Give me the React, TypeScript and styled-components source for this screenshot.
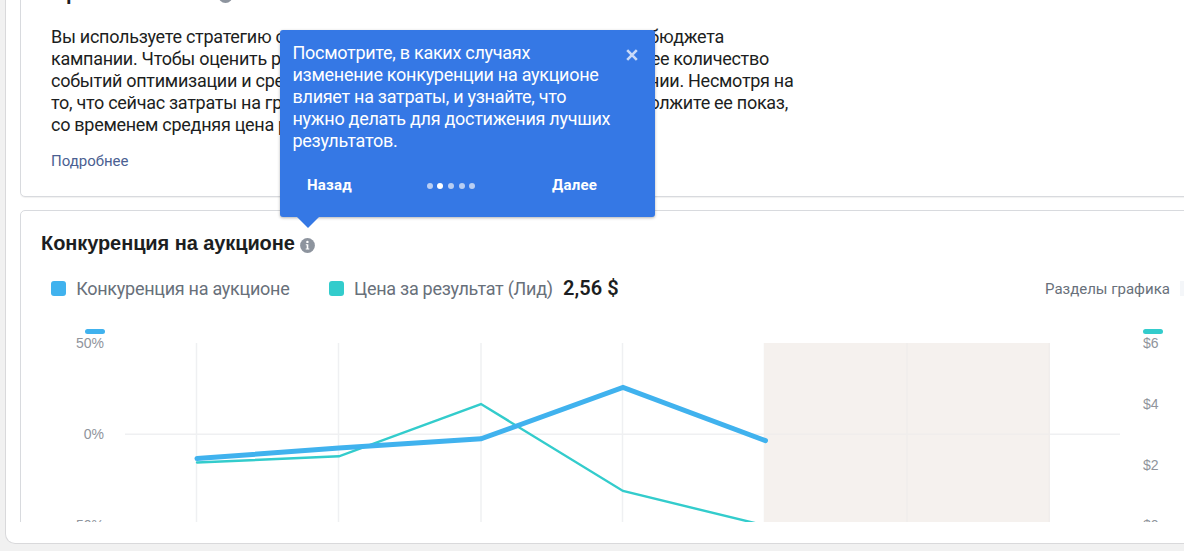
import React from "react";
import styled, { createGlobalStyle } from "styled-components";

const GlobalStyle = createGlobalStyle`
  * {
    box-sizing: border-box;
  }

  body {
    margin: 0;
    overflow: hidden;
    background: #f1f1f1;
    font-family: Roboto, "Liberation Sans", sans-serif;
    color: #1c1e21;
  }
`;

const Page = styled.div`
  position: relative;
  height: 551px;
  padding-left: 5px;
  overflow: hidden;
`;

const Panel = styled.div`
  width: 1200px;
  height: 544px;
  padding-left: 14px;
  background: #fff;
  border: 1px solid #d9d9db;
  border-top: none;
  border-radius: 0 0 0 10px;
`;

const PanelBody = styled.div`
  display: flex;
  flex-direction: column;
  gap: 13px;
  height: 522px;
  overflow: hidden;
`;

const Card = styled.section`
  flex: none;
  border: 1px solid #d8dade;
  border-radius: 5px;
  background: #fff;
`;

const StrategyCard = styled(Card)`
  height: 217px;
  margin-top: -20px;
  padding: 0 30px;
  box-shadow: 0 1px 1px rgba(0, 0, 0, 0.06);
`;

const AuctionCard = styled(Card)`
  height: 420px;
`;

const CardTitle = styled.h2`
  display: flex;
  align-items: center;
  gap: 5px;
  height: 24px;
  margin: 0;
  font-family: "Liberation Sans", Arial, sans-serif;
  font-size: 20px;
  line-height: 24px;
  font-weight: 700;
  white-space: nowrap;
`;

const StrategyTitle = styled(CardTitle)`
  margin-left: -9px;
`;

const AuctionTitle = styled(CardTitle)`
  margin: 20px 0 0 20px;
`;

const TitleText = styled.span`
  letter-spacing: -0.08px;
`;

const Description = styled.div`
  margin-top: 21px;
  font-size: 18px;
  line-height: 22px;
  letter-spacing: -0.28px;
`;

const Line = styled.div<{ $width: number }>`
  display: flex;
  justify-content: space-between;
  width: ${({ $width }) => $width}px;
  height: 22px;
  white-space: nowrap;
`;

const MoreLink = styled.a`
  display: block;
  margin-top: 15px;
  color: #4b5f92;
  font-size: 15px;
  line-height: 20px;
`;

const Legend = styled.div`
  display: flex;
  align-items: center;
  height: 24px;
  margin: 21px 0 0 30px;
  color: #68707a;
  font-size: 18px;
  letter-spacing: -0.27px;
  white-space: nowrap;
`;

const LegendItem = styled.div`
  display: flex;
  align-items: center;
  gap: 10.2px;
  margin-right: 39.4px;
`;

const Swatch = styled.span<{ $color: string }>`
  width: 15px;
  height: 15px;
  border-radius: 3px;
  background: ${({ $color }) => $color};
`;

const Value = styled.strong`
  color: #1c1e21;
  font-size: 20px;
  font-weight: 600;
  letter-spacing: 0.05px;
`;

const Sections = styled.div`
  display: flex;
  align-items: center;
  gap: 10px;
  flex: none;
  width: 158px;
  margin-left: auto;
  font-size: 15px;
  letter-spacing: 0;
`;

const SectionsLabel = styled.span`
  flex: none;
  width: 125px;
  padding-top: 2px;
`;

const SectionsButton = styled.span`
  flex: none;
  width: 24px;
  height: 15px;
  background: #f4f6f9;
`;

const Chart = styled.svg`
  display: block;
  width: 1163px;
  height: 222px;
`;

const Tour = styled.div`
  position: absolute;
  top: 30px;
  left: 280px;
  width: 375px;
  height: 187px;
  padding: 12px 13px 12px 12.5px;
  border-radius: 3px;
  background: #3578e5;
  box-shadow: 0 1px 3px rgba(0, 0, 0, 0.3);
  color: #fff;

  &::after {
    content: "";
    position: absolute;
    top: 187px;
    left: 17px;
    border: solid transparent;
    border-width: 11px 11px 0;
    border-top-color: #3578e5;
  }
`;

const TourText = styled.p`
  margin: 0;
  font-size: 18px;
  line-height: 22px;
  letter-spacing: -0.28px;
  white-space: nowrap;
`;

const TourNav = styled.div`
  display: flex;
  align-items: center;
  justify-content: space-between;
  margin: 22px 45px 0 14.5px;
`;

const TourButton = styled.button`
  padding: 0;
  border: none;
  background: none;
  color: #fff;
  font: 700 15px/22px Roboto, "Liberation Sans", sans-serif;
  letter-spacing: 0.2px;
`;

const Dots = styled.div`
  display: flex;
  gap: 4.6px;
  padding: 2.5px 2px 0 0;
`;

const Dot = styled.span<{ $active: boolean }>`
  width: 6px;
  height: 6px;
  border-radius: 50%;
  background: ${({ $active }) => ($active ? "#fff" : "#b9cef3")};
`;

const CloseIcon = styled.svg`
  position: absolute;
  top: 18.5px;
  left: 346px;
`;

const InfoSvg = styled.svg`
  flex: none;
  margin-top: 5px;
`;

const InfoIcon = () => (
  <InfoSvg width="15" height="15" viewBox="0 0 15 15">
    <circle cx="7.5" cy="7.5" r="7.4" fill="#8d949e" />
    <circle cx="7.4" cy="3.9" r="1.2" fill="#fff" />
    <path d="M5.8 6.2h2.5v4.3h1v1h-3.6v-1h1V7.2H5.8z" fill="#fff" />
  </InfoSvg>
);

const BLUE = "#40b2ee";
const TEAL = "#33cccc";

const lines = [
  { start: "Вы используете стратегию с низкой ценой", end: "целей в рамках вашего бюджета", width: 673 },
  { start: "кампании. Чтобы оценить результат,", end: "проверьте общее количество", width: 718 },
  { start: "событий оптимизации и среднюю цену", end: "в этой кампании. Несмотря на", width: 742.5 },
  { start: "то, что сейчас затраты на группу растут,", end: "продолжите ее показ,", width: 737 },
  { start: "со временем средняя цена результата снизится.", end: "", width: 600 },
];

const gridX = [196.5, 338.5, 481, 622.5, 764.5];

export default function App() {
  return (
    <>
      <GlobalStyle />
      <Page>
        <Panel>
          <PanelBody>
            <StrategyCard>
              <StrategyTitle>
                <TitleText>Стратегия ставок</TitleText>
                <InfoIcon />
              </StrategyTitle>
              <Description>
                {lines.map((line) => (
                  <Line key={line.start} $width={line.width}>
                    <span>{line.start}</span>
                    <span>{line.end}</span>
                  </Line>
                ))}
              </Description>
              <MoreLink>Подробнее</MoreLink>
            </StrategyCard>

            <AuctionCard>
              <AuctionTitle>
                <TitleText>Конкуренция на аукционе</TitleText>
                <InfoIcon />
              </AuctionTitle>
              <Legend>
                <LegendItem>
                  <Swatch $color={BLUE} />
                  Конкуренция на аукционе
                </LegendItem>
                <LegendItem>
                  <Swatch $color={TEAL} />
                  Цена за результат (Лид)
                  <Value>2,56 $</Value>
                </LegendItem>
                <Sections>
                  <SectionsLabel>Разделы графика</SectionsLabel>
                  <SectionsButton />
                </Sections>
              </Legend>
              <Chart viewBox="21 300 1163 222">
                <g stroke="#eff0f2" strokeWidth="1.5">
                  <path d="M125 434.2H1120" />
                  {gridX.map((x) => (
                    <path key={x} d={`M${x} 343V522`} />
                  ))}
                </g>
                <rect x="764" y="343" width="286" height="179" fill="#f5f1ee" />
                <path
                  d="M764 434.2H1050M907 343V522M1049.2 343V522"
                  stroke="#f0edec"
                  strokeWidth="1.5"
                />
                <rect x="85" y="329" width="20" height="5" rx="2.5" fill={BLUE} />
                <rect x="1143" y="329" width="20" height="5" rx="2.5" fill={TEAL} />
                <g fill="#90949c" fontSize="14" fontFamily="Liberation Sans, sans-serif">
                  <text x="104" y="348" textAnchor="end">50%</text>
                  <text x="104" y="439" textAnchor="end">0%</text>
                  <text x="104" y="530" textAnchor="end">50%</text>
                  <text x="1143" y="348">$6</text>
                  <text x="1143" y="409">$4</text>
                  <text x="1143" y="470">$2</text>
                  <text x="1143" y="530">$0</text>
                </g>
                <g fill="none" strokeLinecap="round">
                  <path
                    d="M197 462.5L339 456.3L481 404L623 491L765 525.5"
                    stroke={TEAL}
                    strokeWidth="2.4"
                  />
                  <path
                    d="M197 458.5L339 448L481 438.8L623 387.5L765.5 440.7"
                    stroke={BLUE}
                    strokeWidth="5"
                  />
                </g>
              </Chart>
            </AuctionCard>
          </PanelBody>
        </Panel>

        <Tour>
          <TourText>
            Посмотрите, в каких случаях
            <br />
            изменение конкуренции на аукционе
            <br />
            влияет на затраты, и узнайте, что
            <br />
            нужно делать для достижения лучших
            <br />
            результатов.
          </TourText>
          <TourNav>
            <TourButton>Назад</TourButton>
            <Dots>
              {[0, 1, 2, 3, 4].map((step) => (
                <Dot key={step} $active={step === 1} />
              ))}
            </Dots>
            <TourButton>Далее</TourButton>
          </TourNav>
          <CloseIcon width="12" height="12" viewBox="0 0 12 12">
            <path d="M1.2 1.2l9.6 9.6M10.8 1.2l-9.6 9.6" stroke="#c9daf8" strokeWidth="2.6" />
          </CloseIcon>
        </Tour>
      </Page>
    </>
  );
}
